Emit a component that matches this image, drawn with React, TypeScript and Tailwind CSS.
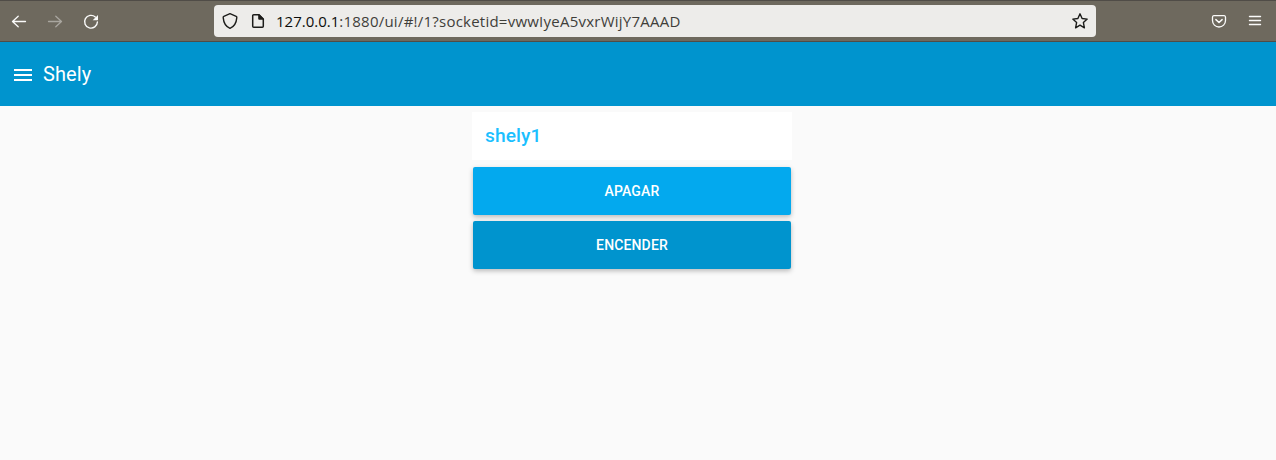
function BackIcon() {
  return (
    <svg width="16" height="16" viewBox="0 0 16 16" fill="none" stroke="#fbfbfa" strokeWidth="1.3" strokeLinecap="round" strokeLinejoin="round">
      <path d="M7.2 2.3 1.5 7.500l5.700 5.200M1.700 7.500h12.800" />
    </svg>
  );
}

function ForwardIcon() {
  return (
    <svg width="16" height="16" viewBox="0 0 16 16" fill="none" stroke="#a9a69f" strokeWidth="1.3" strokeLinecap="round" strokeLinejoin="round">
      <path d="M8.8 2.3 14.500 7.500l-5.700 5.200M14.300 7.500H1.500" />
    </svg>
  );
}

function ReloadIcon() {
  return (
    <svg width="16" height="16" viewBox="0 0 16 16" fill="none">
      <path d="M12.3 3A6.400 6.400 0 1 0 14.400 8" stroke="#fbfbfa" strokeWidth="1.4" strokeLinecap="round" />
      <path d="M15 .9v4.800c0 .3-.2.5-.5.5H9.700z" fill="#fbfbfa" />
    </svg>
  );
}

function ShieldIcon() {
  return (
    <svg width="16" height="18" viewBox="0 0 16 18" fill="none" stroke="#1c1c1a" strokeWidth="1.4" strokeLinejoin="round">
      <path d="M8 1.700 14.200 4.300C14.700 4.500 14.900 5 14.800 5.600 14.400 10.500 12.200 14.600 8 16.300 3.800 14.600 1.600 10.500 1.200 5.600 1.100 5 1.300 4.500 1.800 4.300Z" />
    </svg>
  );
}

function PageIcon() {
  return (
    <svg width="14" height="16" viewBox="0 0 14 16" fill="none">
      <path d="M2.700 1.700H8L12.300 6v7.300a1 1 0 0 1-1 1H2.700a1 1 0 0 1-1-1V2.700a1 1 0 0 1 1-1Z" stroke="#1c1c1a" strokeWidth="1.500" strokeLinejoin="round" />
      <path d="M7.200 1.300H8.300L12.700 5.700V6.700H8.200a1 1 0 0 1-1-1Z" fill="#1c1c1a" />
    </svg>
  );
}

function StarIcon() {
  return (
    <svg width="18" height="18" viewBox="0 0 18 18" fill="none" stroke="#1c1c1a" strokeWidth="1.400" strokeLinejoin="round">
      <path d="M9 1.800 11.100 6.500 16.200 7.100 12.400 10.600 13.400 15.800 9 13.200 4.600 15.800 5.600 10.600 1.800 7.100 6.900 6.500Z" />
    </svg>
  );
}

function PocketIcon() {
  return (
    <svg width="16" height="16" viewBox="0 0 16 16" fill="none" stroke="#fbfbfa" strokeLinecap="round" strokeLinejoin="round">
      <path d="M2.800 2.700H13.200A1.500 1.500 0 0 1 14.500 4.200V7.500A6.500 6.500 0 0 1 1.500 7.500V4.200A1.500 1.500 0 0 1 2.800 2.700Z" strokeWidth="1.300" />
      <path d="M4.900 6.600 8 9.500 11.100 6.600" strokeWidth="1.500" />
    </svg>
  );
}

function MenuIcon() {
  return (
    <svg width="14" height="12" viewBox="0 0 14 12" stroke="#fbfbfa" strokeWidth="1.400" strokeLinecap="round">
      <path d="M1.500 1.500h11M1.500 5.500h11M1.500 9.500h11" />
    </svg>
  );
}

function BrowserBar() {
  return (
    <div className="flex h-[42px] items-center border-y border-[#504c47] bg-[#6e695e] pl-[11px] pr-[14px]">
      <div className="flex w-[203px] items-center gap-5 pt-px">
        <button aria-label="Back"><BackIcon /></button>
        <button aria-label="Forward"><ForwardIcon /></button>
        <button aria-label="Reload"><ReloadIcon /></button>
      </div>
      <div className="flex h-8 w-[882px] items-center rounded-[4px] bg-[#edecea] pl-2 pr-[7px]">
        <ShieldIcon />
        <div className="ml-[13px]"><PageIcon /></div>
        <div className="ml-[11px] whitespace-nowrap font-['Open_Sans',sans-serif] text-[15px] leading-8 tracking-[0.235px] text-[#3f3e3a]">
          <span className="tracking-[0px] text-[#0c0c0b]">127.0.0.1</span>:1880/ui/#!/1?socketid=vwwIyeA5vxrWijY7AAAD
        </div>
        <button aria-label="Bookmark" className="ml-auto"><StarIcon /></button>
      </div>
      <div className="ml-auto flex items-center gap-[21px]">
        <button aria-label="Pocket"><PocketIcon /></button>
        <button aria-label="Menu"><MenuIcon /></button>
      </div>
    </div>
  );
}

function ActionButton({ label, tone }: { label: string; tone: string }) {
  return (
    <button className={`h-12 w-[318px] rounded-[2px] text-center text-[14px] font-medium tracking-[0.140px] text-white shadow-[0_2px_5px_0_rgba(0,0,0,0.26)] ${tone}`}>
      {label}
    </button>
  );
}

export default function App() {
  return (
    <div className="flex h-[460px] w-full flex-col overflow-hidden bg-[#fafafa] font-[Roboto,sans-serif]">
      <BrowserBar />
      <header className="flex h-16 items-center bg-[#0094ce] pl-[14px] text-white">
        <svg width="18" height="12" viewBox="0 0 18 12" fill="white" className="mt-0.5">
          <path d="M0 0h18v2H0zM0 5h18v2H0zM0 10h18v2H0z" />
        </svg>
        <h1 className="ml-[11px] text-[20px] leading-6 tracking-[0.100px]">Shely</h1>
      </header>
      <main className="ml-[472px] mt-1.5 flex w-80 flex-col items-center">
        <div className="flex h-12 w-full items-center bg-white pl-[13px]">
          <h2 className="text-[19.200px] font-medium tracking-[0.100px] text-[#1bbfff]">shely1</h2>
        </div>
        <div className="mt-[7px] flex flex-col gap-1.5">
          <ActionButton label="APAGAR" tone="bg-[#03a9ee]" />
          <ActionButton label="ENCENDER" tone="bg-[#0094ce]" />
        </div>
      </main>
    </div>
  );
}
